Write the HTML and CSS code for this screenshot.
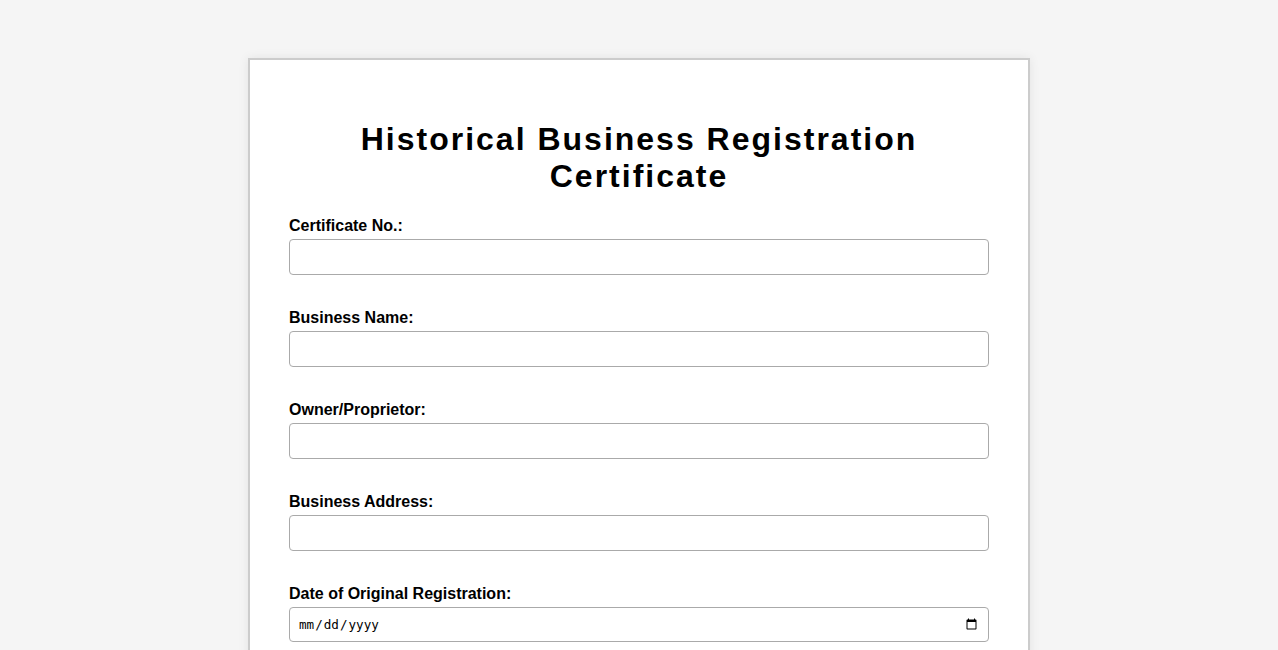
FILE: index.html
```html
<!DOCTYPE html>
<html lang="en">
<head>
    <meta charset="UTF-8">
    <meta name="viewport" content="width=device-width, initial-scale=1.0">
    <title>Historical Business Registration Certificate</title>
    <link rel="stylesheet" href="styles.css">
</head>
<body>
    <div class="certificate">
        <h1>Historical Business Registration Certificate</h1>
        <form>
            <div class="form-group">
                <label for="certNo">Certificate No.:</label>
                <input type="text" id="certNo">
            </div>

            <div class="form-group">
                <label for="businessName">Business Name:</label>
                <input type="text" id="businessName">
            </div>

            <div class="form-group">
                <label for="owner">Owner/Proprietor:</label>
                <input type="text" id="owner">
            </div>

            <div class="form-group">
                <label for="address">Business Address:</label>
                <input type="text" id="address">
            </div>

            <div class="form-group">
                <label for="regDate">Date of Original Registration:</label>
                <input type="date" id="regDate">
            </div>
        </form>
    </div>
</body>
</html>
```

FILE: styles.css
```css
body {
    font-family: Arial, 'Liberation Sans', sans-serif;
    background-color: #f5f5f5;
    margin: 0;
    padding: 58px 0;
}

.certificate {
    background-color: white;
    width: 700px;
    margin: 0 auto;
    padding: 39px;
    border: 2px solid #ccc;
    box-shadow: 0 0 10px rgba(0, 0, 0, 0.08);
}

h1 {
    text-align: center;
    font-size: 32px;
    letter-spacing: 2px;
    color: #000;
    margin: 22px 0 22px;
}

.form-group {
    margin-bottom: 34px;
}

label {
    display: block;
    font-weight: bold;
    margin-bottom: 4px;
}

input {
    width: 100%;
    box-sizing: border-box;
    padding: 8px;
    border: 1px solid #aaa;
    border-radius: 4px;
}

input[type="text"] {
    font-size: 16px;
}

input[type="date"] {
    font-size: 12.6px;
    height: 35px;
}
```
